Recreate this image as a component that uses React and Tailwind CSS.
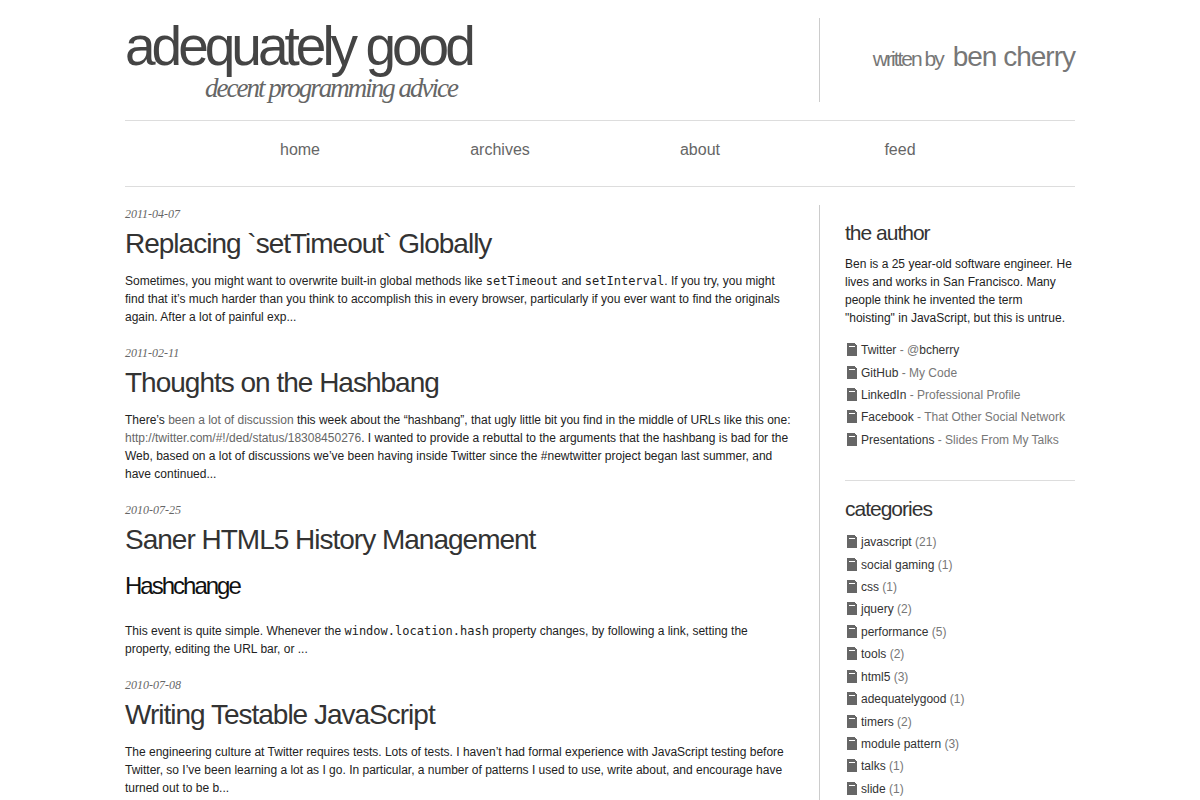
const navItems = ['home', 'archives', 'about', 'feed'];

const posts = [
    {
        date: '2011-04-07',
        title: 'Replacing `setTimeout` Globally',
        body: (
            <>
                Sometimes, you might want to overwrite built-in global methods like <Code>setTimeout</Code> and <Code>setInterval</Code>. If you try, you might find that it’s much harder than you think to accomplish this in every browser, particularly if you ever want to find the originals again. After a lot of painful exp...
            </>
        ),
    },
    {
        date: '2011-02-11',
        title: 'Thoughts on the Hashbang',
        body: (
            <>
                There’s <a href="#" className="text-[#666]">been a lot of discussion</a> this week about the “hashbang”, that ugly little bit you find in the middle of URLs like this one: <a href="#" className="text-[#666]">http://twitter.com/#!/ded/status/18308450276</a>. I wanted to provide a rebuttal to the arguments that the hashbang is bad for the Web, based on a lot of discussions we’ve been having inside Twitter since the #newtwitter project began last summer, and have continued...
            </>
        ),
    },
    {
        date: '2010-07-25',
        title: 'Saner HTML5 History Management',
        subtitle: 'Hashchange',
        body: (
            <>
                This event is quite simple. Whenever the <Code>window.location.hash</Code> property changes, by following a link, setting the property, editing the URL bar, or ...
            </>
        ),
    },
    {
        date: '2010-07-08',
        title: 'Writing Testable JavaScript',
        body: 'The engineering culture at Twitter requires tests. Lots of tests. I haven’t had formal experience with JavaScript testing before Twitter, so I’ve been learning a lot as I go. In particular, a number of patterns I used to use, write about, and encourage have turned out to be b...',
    },
];

const profiles = [
    { name: 'Twitter', note: <>- @<a href="#" className="text-[#333]">bcherry</a></> },
    { name: 'GitHub', note: '- My Code' },
    { name: 'LinkedIn', note: '- Professional Profile' },
    { name: 'Facebook', note: '- That Other Social Network' },
    { name: 'Presentations', note: '- Slides From My Talks' },
];

const categories = [
    { name: 'javascript', note: '(21)' },
    { name: 'social gaming', note: '(1)' },
    { name: 'css', note: '(1)' },
    { name: 'jquery', note: '(2)' },
    { name: 'performance', note: '(5)' },
    { name: 'tools', note: '(2)' },
    { name: 'html5', note: '(3)' },
    { name: 'adequatelygood', note: '(1)' },
    { name: 'timers', note: '(2)' },
    { name: 'module pattern', note: '(3)' },
    { name: 'talks', note: '(1)' },
    { name: 'slide', note: '(1)' },
];

function Code({ children }) {
    return <code className="font-['DejaVu_Sans_Mono',monospace]">{children}</code>;
}

function PageIcon() {
    return (
        <svg className="w-4 h-4 shrink-0" viewBox="0 0 16 16" shapeRendering="crispEdges" aria-hidden="true">
            <path d="M2 1h8v1h1v1h1v11H2z" fill="#666" />
            <path d="M4 4h6v1H4z" fill="#fff" />
        </svg>
    );
}

function LinkList({ items, className }) {
    return (
        <ul className={`grid auto-rows-fr ${className}`}>
            {items.map(item => (
                <li key={item.name} className="flex items-center text-[#777]">
                    <PageIcon />
                    <span><a href="#" className="text-[#333]">{item.name}</a> {item.note}</span>
                </li>
            ))}
        </ul>
    );
}

function Post({ post }) {
    return (
        <article className="mb-[18px] last:mb-0">
            <time className="block font-['Liberation_Serif',serif] italic text-[#666]">{post.date}</time>
            <h2 className="mt-[7px] mb-3.5 text-[28px] leading-7 tracking-[-1px]">
                <a href="#" className="text-[#333]">{post.title}</a>
            </h2>
            {post.subtitle && <h3 className="mb-[18px] text-2xl leading-9 tracking-[-2px] text-[#111]">{post.subtitle}</h3>}
            <p>{post.body}</p>
        </article>
    );
}

export default function App() {
    return (
        <div className="min-h-screen bg-white font-['Liberation_Sans',Arial,sans-serif] text-xs leading-[18px] text-[#222]">
            <div className="max-w-[950px] min-h-screen mx-auto flex flex-col">
                <header className="flex my-[18px]">
                    <div className="flex-1">
                        <h1 className="text-[55px] leading-14 tracking-[-4px]">
                            <a href="#" className="text-[#444]">adequately good</a>
                        </h1>
                        <p className="pl-20 font-['Liberation_Serif',serif] italic text-[27px] leading-7 tracking-[-2px] text-[#666]">decent programming advice</p>
                    </div>
                    <div className="w-64 border-l border-[#ccc] flex items-baseline justify-end gap-2.5 pt-[21px] leading-9 text-[#777]">
                        <span className="text-[21px] tracking-[-2px]">written by</span>
                        <a href="#" className="text-[28px] tracking-[-1px]">ben cherry</a>
                    </div>
                </header>

                <nav className="flex justify-center border-y border-[#ddd] pt-[17px] pb-6 text-base leading-6">
                    {navItems.map(item => (
                        <a key={item} href="#" className="w-[200px] text-center text-[#666]">{item}</a>
                    ))}
                </nav>

                <div className="flex-1 flex mt-[18px]">
                    <main className="flex-1 pr-6">
                        {posts.map(post => <Post key={post.date} post={post} />)}
                    </main>

                    <aside className="w-64 shrink-0 border-l border-[#ccc] pl-[25px]">
                        <section className="pt-3.5 pb-[29px] border-b border-[#ddd]">
                            <h2 className="mb-2 text-[21px] leading-7 tracking-[-1px] text-[#333]">the author</h2>
                            <p className="mb-3">Ben is a 25 year-old software engineer. He lives and works in San Francisco. Many people think he invented the term "hoisting" in JavaScript, but this is untrue.</p>
                            <LinkList items={profiles} className="min-h-[112px]" />
                        </section>
                        <section className="pt-3.5">
                            <h2 className="mb-2 text-[21px] leading-7 tracking-[-1px] text-[#333]">categories</h2>
                            <LinkList items={categories} className="min-h-[269px]" />
                        </section>
                    </aside>
                </div>
            </div>
        </div>
    );
}
